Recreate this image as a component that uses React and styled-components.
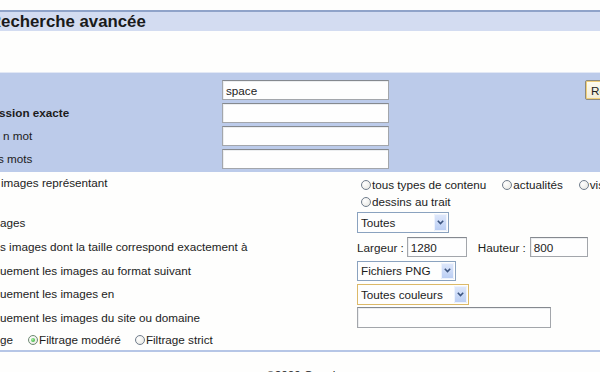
import React from "react";
import styled, { createGlobalStyle, css } from "styled-components";

const GlobalStyle = createGlobalStyle`
  html, body { margin: 0; padding: 0; background: #fefefe; overflow: hidden; }
  body {
    font-family: "Liberation Sans", Arial, sans-serif;
    font-size: 11.7px;
    color: #1e1e1e;
  }
`;

const Page = styled.div`
  width: 600px;
  height: 372px;
  overflow: hidden;
  background: #fefefd;
`;

const TitleBar = styled.div`
  margin-top: 10px;
  height: 19px;
  border-top: 2px solid #8fa3c9;
  background: #d3dcf1;
  display: flex;
  align-items: center;
`;

const Title = styled.h1`
  margin: 0 0 0 -11px;
  font-size: 16.8px;
  font-weight: bold;
  line-height: 19px;
  color: #1a1a1a;
  white-space: nowrap;
`;

const SearchPanel = styled.div`
  margin-top: 41px;
  border-top: 1px solid #e2e8f5;
  background: #bccbea;
  padding: 7px 0 3px;
  display: grid;
  grid-template-columns: 222px 167px 1fr;
  grid-auto-rows: 20px;
  row-gap: 3px;
  align-items: center;
`;

const Label = styled.div`
  white-space: nowrap;
  text-indent: ${(p) => p.$indent || 0}px;
  font-weight: ${(p) => (p.$bold ? "bold" : "normal")};
  line-height: 14px;
  color: #1c1c1c;
`;

const TextField = styled.div`
  box-sizing: border-box;
  width: ${(p) => p.$w}px;
  height: ${(p) => p.$h || 20}px;
  background: #fefefe;
  border: 1px solid #a3a6ab;
  border-top-color: #85898f;
  box-shadow: inset 1px 1px 0 #eceef0;
  padding: 0 3px;
  display: flex;
  align-items: center;
  color: #222;
`;

const Button = styled.div`
  margin-left: 196px;
  box-sizing: border-box;
  height: 20px;
  padding: 0 6px 0 5px;
  display: inline-flex;
  align-items: center;
  white-space: nowrap;
  justify-self: start;
  border: 1px solid #8c8a7e;
  border-radius: 2px;
  box-shadow: inset 0 0 0 1px #f1cf78;
  background: linear-gradient(#fffdf2, #f1ecd6);
  color: #222;
`;

const Options = styled.div`
  padding-top: 4px;
  display: flex;
  flex-direction: column;
`;

const OptionRow = styled.div`
  display: grid;
  grid-template-columns: 357px 1fr;
  height: ${(p) => p.$h}px;
  align-items: ${(p) => (p.$top ? "start" : "center")};
`;

const RadioGroup = styled.div`
  padding-left: 4px;
  display: flex;
  flex-direction: column;
`;

const RadioLine = styled.div`
  display: flex;
  align-items: center;
  height: 17px;
  white-space: nowrap;
`;

const RadioOption = styled.span`
  display: inline-flex;
  align-items: center;
  margin-right: ${(p) => (p.$gap == null ? 16 : p.$gap)}px;
  white-space: nowrap;
  color: #1c1c1c;
`;

const RadioDot = styled.span`
  position: relative;
  flex: none;
  box-sizing: border-box;
  width: 10px;
  height: 10px;
  margin-right: 1px;
  border-radius: 50%;
  border: 1px solid #707d8c;
  background: radial-gradient(circle at 35% 35%, #ffffff, #e4e4de);
  ${(p) =>
    p.$checked &&
    css`
      border-color: #6e8a72;
      &::after {
        content: "";
        position: absolute;
        left: 2px;
        top: 2px;
        width: 4px;
        height: 4px;
        border-radius: 50%;
        background: radial-gradient(circle at 35% 35%, #a6eea0, #20a428);
      }
    `}
`;

const Inline = styled.div`
  display: flex;
  align-items: center;
  white-space: nowrap;
`;

const InlineLabel = styled.span`
  margin: 0 ${(p) => p.$after || 0}px 0 ${(p) => p.$before || 0}px;
`;

const Combo = styled.div`
  box-sizing: border-box;
  width: ${(p) => p.$w}px;
  height: ${(p) => p.$h || 20}px;
  display: flex;
  align-items: stretch;
  background: #fefefe;
  border: 1px solid ${(p) => (p.$hover ? "#dcb968" : "#8aa2bf")};
  padding: 1px;
`;

const ComboText = styled.span`
  flex: 1;
  display: flex;
  align-items: center;
  padding-left: 2px;
  white-space: nowrap;
  color: #1c1c1c;
`;

const ComboArrow = styled.span`
  width: 13px;
  flex: none;
  display: flex;
  align-items: center;
  justify-content: center;
  border-radius: 1px;
  background: linear-gradient(#dfe8fb, #b9cdf3);
  box-shadow: inset 0 0 0 1px #eef3fd;
`;

const SafeRow = styled.div`
  display: flex;
  align-items: center;
  white-space: nowrap;
`;

const Separator = styled.div`
  border-top: 2px solid #b6c6e6;
`;

const Footer = styled.div`
  padding: 16px 0 0 8px;
  text-align: center;
  line-height: 14px;
  color: #222;
`;

const Chevron = () => (
  <svg width="7" height="5" viewBox="0 0 7 5">
    <path d="M0.8 0.8 L3.5 3.6 L6.2 0.8" fill="none" stroke="#3d5580" strokeWidth="1.6" />
  </svg>
);

const Select = ({ w, h, hover, children }) => (
  <Combo $w={w} $h={h} $hover={hover}>
    <ComboText>{children}</ComboText>
    <ComboArrow>
      <Chevron />
    </ComboArrow>
  </Combo>
);

const Radio = ({ checked, gap, children }) => (
  <RadioOption $gap={gap}>
    <RadioDot $checked={checked} />
    {children}
  </RadioOption>
);

const searchRows = [
  { label: "", value: "space" },
  { label: "ssion exacte", bold: true, indent: -1, value: "" },
  { label: "n mot", indent: 3, value: "" },
  { label: "s mots", indent: -2, value: "" },
];

export default function App() {
  return (
    <Page>
      <GlobalStyle />
      <TitleBar>
        <Title>Recherche avancée</Title>
      </TitleBar>

      <SearchPanel>
        {searchRows.map((r, i) => (
          <React.Fragment key={i}>
            <Label $bold={r.bold} $indent={r.indent}>
              {r.label}
            </Label>
            <TextField $w={167}>{r.value}</TextField>
            {i === 0 ? <Button>Recherche Google</Button> : <span />}
          </React.Fragment>
        ))}
      </SearchPanel>

      <Options>
        <OptionRow $h={34} $top>
          <Label $indent={1}>images représentant</Label>
          <RadioGroup>
            <RadioLine>
              <Radio>tous types de contenu</Radio>
              <Radio>actualités</Radio>
              <Radio>visages</Radio>
              <Radio>photos</Radio>
            </RadioLine>
            <RadioLine>
              <Radio>dessins au trait</Radio>
            </RadioLine>
          </RadioGroup>
        </OptionRow>

        <OptionRow $h={25}>
          <Label>ages</Label>
          <Select w={92} h={21}>Toutes</Select>
        </OptionRow>

        <OptionRow $h={24}>
          <Label>s images dont la taille correspond exactement à</Label>
          <Inline>
            <InlineLabel $after={3}>Largeur :</InlineLabel>
            <TextField $w={60}>1280</TextField>
            <InlineLabel $before={11} $after={4}>
              Hauteur :
            </InlineLabel>
            <TextField $w={58}>800</TextField>
          </Inline>
        </OptionRow>

        <OptionRow $h={23}>
          <Label>uement les images au format suivant</Label>
          <Select w={99}>Fichiers PNG</Select>
        </OptionRow>

        <OptionRow $h={24}>
          <Label>uement les images en</Label>
          <Select w={112} h={21} hover>
            Toutes couleurs
          </Select>
        </OptionRow>

        <OptionRow $h={23}>
          <Label>uement les images du site ou domaine</Label>
          <TextField $w={194} $h={21} />
        </OptionRow>

        <OptionRow $h={21}>
          <SafeRow>
            <InlineLabel $after={15}>ge</InlineLabel>
            <Radio checked gap={14}>
              Filtrage modéré
            </Radio>
            <Radio>Filtrage strict</Radio>
          </SafeRow>
          <span />
        </OptionRow>
      </Options>

      <Separator />
      <Footer>©2009 Google</Footer>
    </Page>
  );
}
